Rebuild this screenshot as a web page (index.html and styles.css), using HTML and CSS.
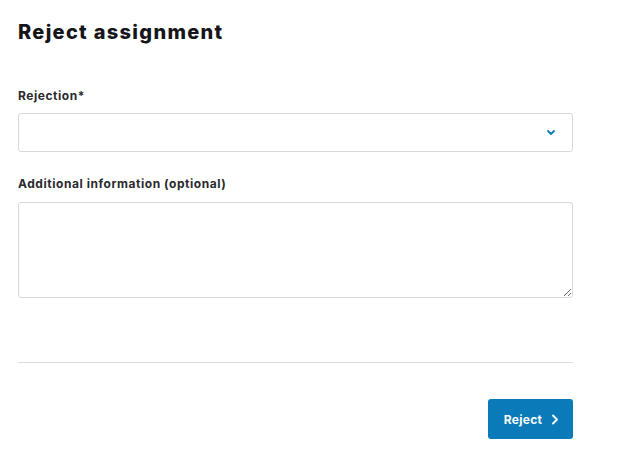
FILE: index.html
```html
<!DOCTYPE html>
<html>
<head><meta charset="utf-8"><link rel="stylesheet" href="styles.css"></head>
<body>
<div class="modal">
  <h1 class="title">Reject assignment</h1>
  <div class="field first">
    <label class="label">Rejection*</label>
    <div class="select">
      <svg class="chev" width="10" height="7" viewBox="0 0 10 7"><path d="M2 2 L5 5 L8 2" fill="none" stroke="#0a7ab8" stroke-width="1.8" stroke-linecap="round" stroke-linejoin="round"/></svg>
    </div>
  </div>
  <div class="field second">
    <label class="label">Additional information (optional)</label>
    <textarea class="area"></textarea>
  </div>
  <hr class="divider">
  <div class="actions">
    <button class="btn">Reject <svg width="8" height="11" viewBox="0 0 8 11"><path d="M2 1.5 L6 5.5 L2 9.5" fill="none" stroke="#fff" stroke-width="1.8" stroke-linecap="round" stroke-linejoin="round"/></svg></button>
  </div>
</div>
</body>
</html>
```
FILE: styles.css
```css
* { box-sizing: border-box; }
html, body { margin: 0; background: #fff; }
body { font-family: Inter, "Liberation Sans", sans-serif; color: #1b1b1f; }
.modal { width: 591px; padding: 19px 18px 0 18px; display: flex; flex-direction: column; }
.title { margin: 0; font-size: 20px; font-weight: 800; line-height: 26px; letter-spacing: 1.3px; color: #16161a; }
.field { display: flex; flex-direction: column; }
.field.first { margin-top: 43px; }
.field.second { margin-top: 24px; }
.label { font-size: 12px; font-weight: 700; line-height: 16px; letter-spacing: 0.55px; color: #2a2a2e; }
.first .label { margin-bottom: 9px; }
.second .label { margin-bottom: 10px; }
.select { height: 39px; border: 1px solid #d8d8d8; border-radius: 3px; display: flex; align-items: center; justify-content: flex-end; padding-right: 16px; }
.area { height: 96px; border: 1px solid #d8d8d8; border-radius: 3px; resize: vertical; font-family: inherit; display: block; width: 100%; }
.divider { border: 0; border-top: 1px solid #dcdcdc; margin: 64px 0 0 0; }
.actions { display: flex; justify-content: flex-end; margin-top: 36px; }
.btn { width: 85px; height: 40px; background: #0a7bb8; color: #fff; border: 0; border-radius: 3px; font-family: inherit; font-size: 12px; font-weight: 700; letter-spacing: 0.3px; display: flex; align-items: center; justify-content: center; gap: 9px; padding: 0 0 0 2px; }
```
